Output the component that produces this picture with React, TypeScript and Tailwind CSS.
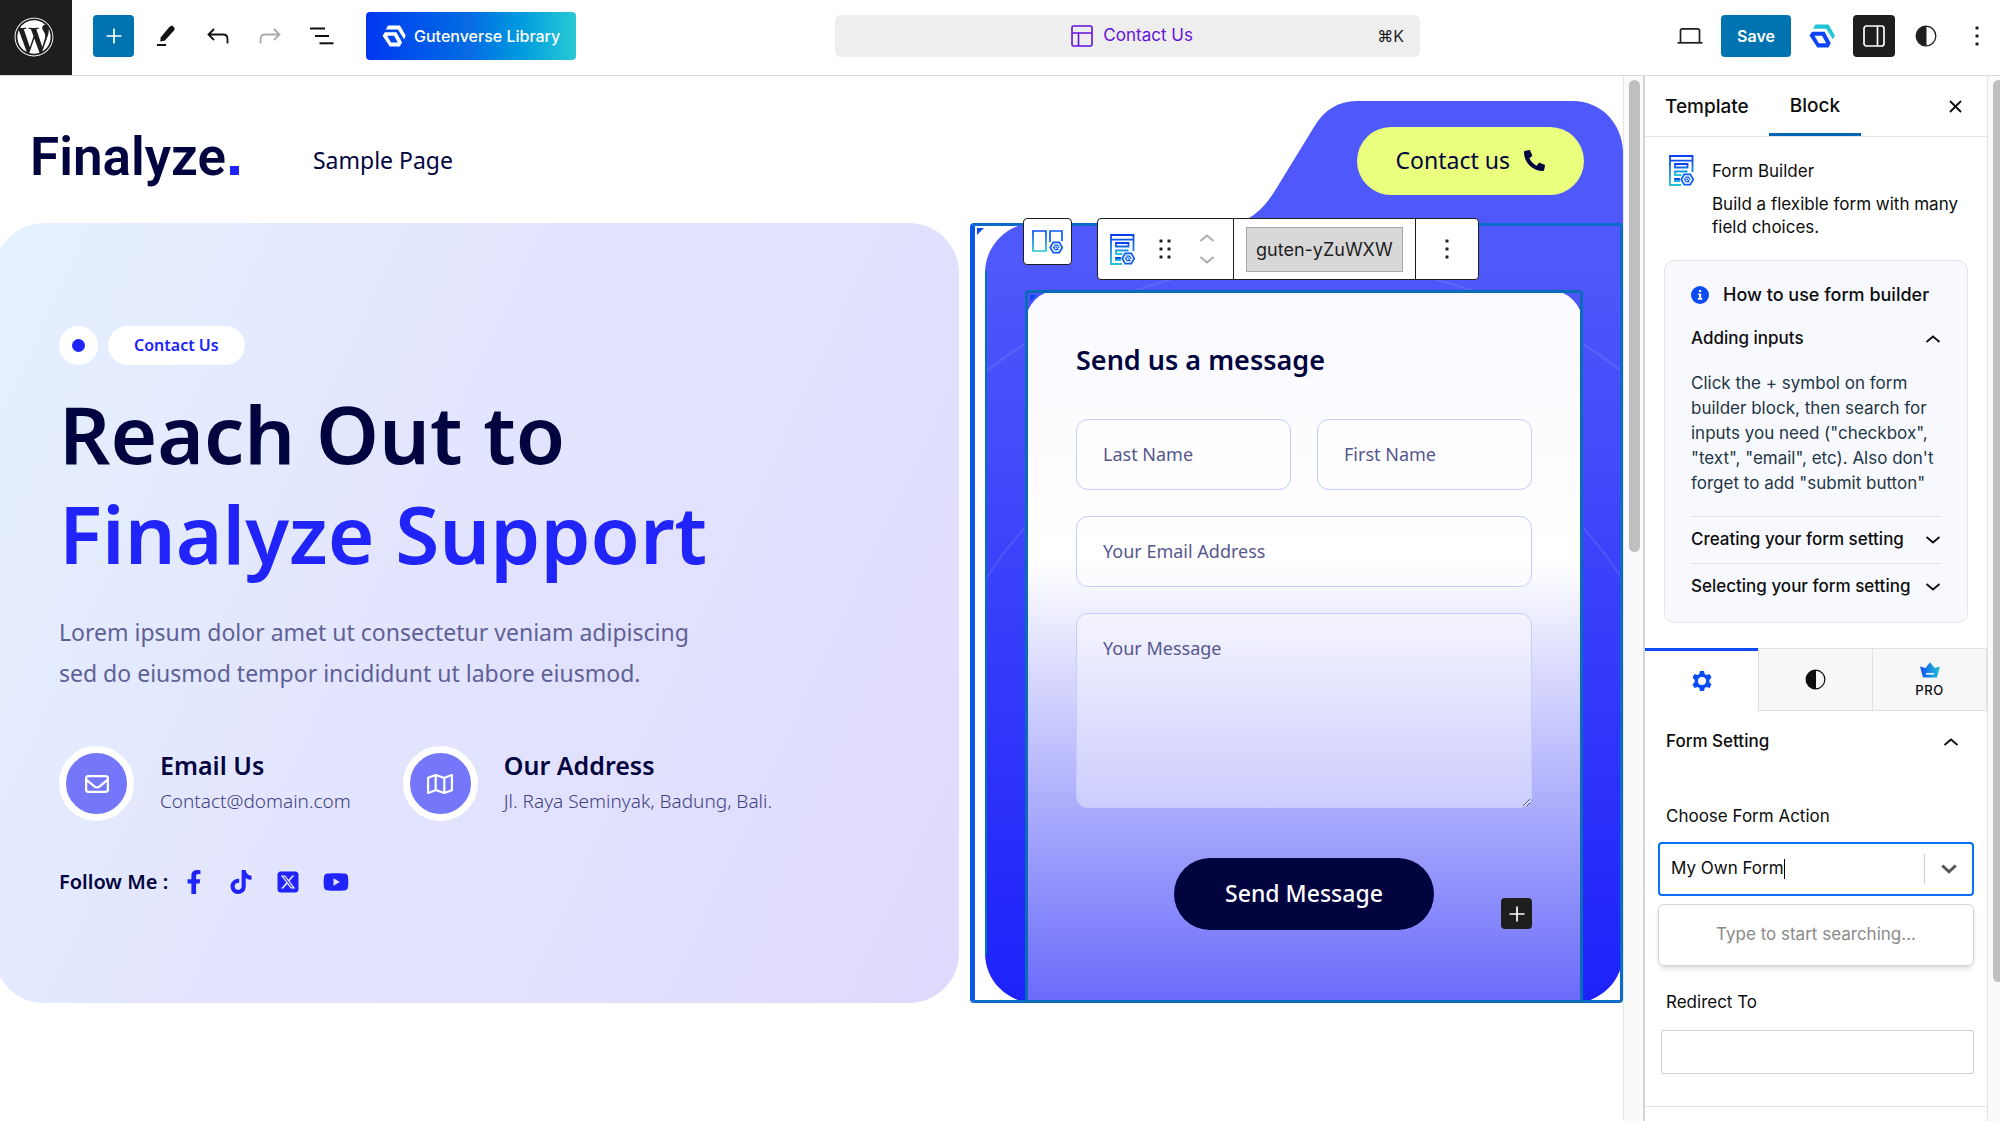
import React from 'react';
import { FaWordpress, FaPhoneAlt, FaFacebookF, FaTiktok, FaYoutube } from 'react-icons/fa';
import { FaSquareXTwitter, FaRegEnvelope, FaRegMap } from 'react-icons/fa6';

interface IconProps {
  className?: string;
}

const GutenverseMark: React.FC<IconProps & { top?: string; bottom?: string }> = ({
  className,
  top = 'currentColor',
  bottom = 'currentColor'
}) => (
  <svg viewBox="0 0 26 24" className={className} aria-hidden="true">
    <path d="M6.500 0.500H19.500L25.800 11.500 24 15.500 17.300 4.800H4z" fill={top} />
    <path
      d="M3 7.800h12.600l6.200 11.400-2.400 4.200H8.400L0.500 11.600zM5.600 11.800l4.200 7.400h7.400l-4.200-7.400z"
      fill={bottom}
      fillRule="evenodd"
    />
  </svg>
);

const FormBuilderIcon: React.FC<IconProps & { id: string }> = ({ className, id }) => (
  <svg viewBox="0 0 25 31" className={className} fill="none" aria-hidden="true">
    <defs>
      <linearGradient id={id} x1="0" y1="0" x2="0" y2="1">
        <stop offset="0" stopColor="#0a3ef0" />
        <stop offset="1" stopColor="#22c4d4" />
      </linearGradient>
    </defs>
    <g stroke={`url(#${id})`} strokeWidth="1.8">
      <path d="M12 30H1V1h22.5v16M1 5.6h22.5" />
      <path d="M6 9h12.5v3.5H6zM18.5 16.5H6v3.5h6.5" />
      <path d="M6 24h4v2H6z" />
    </g>
    <path d="M15.2 19.3h6.1l3 5.2-3 5.2h-6.1l-3-5.2z" fill="#fff" stroke="#0a5cf5" strokeWidth="1.7" />
    <path d="M16 22.2h3.5l1.8 2.8M15.4 24h3l1.6 2.7h-3z" stroke="#0a5cf5" strokeWidth="1.2" />
  </svg>
);

const ColumnsIcon: React.FC<IconProps> = ({ className }) => (
  <svg viewBox="0 0 31 24" className={className} fill="none" aria-hidden="true">
    <defs>
      <linearGradient id="columns-stroke" x1="0" y1="0" x2="0" y2="1">
        <stop offset="0" stopColor="#0a4cf0" />
        <stop offset="1" stopColor="#22c4d4" />
      </linearGradient>
    </defs>
    <path d="M1 1h13v20H1z" stroke="url(#columns-stroke)" strokeWidth="1.7" />
    <path d="M18 12V1h12v10" stroke="#0a5cf5" strokeWidth="1.7" />
    <path d="M21.2 12.3h6.1l3 5.2-3 5.2h-6.1l-3-5.2z" fill="#fff" stroke="#0a5cf5" strokeWidth="1.7" />
    <path d="M22 15.2h3.5l1.8 2.8M21.4 17h3l1.6 2.7h-3z" stroke="#0a5cf5" strokeWidth="1.2" />
  </svg>
);

const HalfCircleIcon: React.FC<IconProps> = ({ className }) => (
  <svg viewBox="0 0 22 22" className={className} aria-hidden="true">
    <circle cx="11" cy="11" r="9.8" fill="none" stroke="currentColor" strokeWidth="1.3" />
    <path d="M11.5 1a10 10 0 1 0 0 20z" fill="currentColor" />
  </svg>
);

const VerticalDots: React.FC<IconProps> = ({ className }) => (
  <svg viewBox="0 0 4 20" className={className} fill="currentColor" aria-hidden="true">
    <rect x="0.5" y="0.5" width="3" height="3" rx="0.5" />
    <rect x="0.5" y="8.5" width="3" height="3" rx="0.5" />
    <rect x="0.5" y="16.5" width="3" height="3" rx="0.5" />
  </svg>
);

const Chevron: React.FC<IconProps & { up?: boolean }> = ({ className, up }) => (
  <svg viewBox="0 0 16 10" className={className} fill="none" stroke="currentColor" strokeWidth="1.8" aria-hidden="true">
    <path d={up ? 'M1.5 8 8 2.5 14.5 8' : 'M1.5 2 8 7.5 14.5 2'} />
  </svg>
);

const PlusIcon: React.FC<IconProps> = ({ className }) => (
  <svg viewBox="0 0 16 16" className={className} stroke="currentColor" strokeWidth="1.7" aria-hidden="true">
    <path d="M8 0.5v15M0.5 8h15" />
  </svg>
);

const TopBar: React.FC = () => (
  <header className="flex h-19 shrink-0 border-b border-[#dcdcdc] bg-white">
    <a href="#dashboard" aria-label="View dashboard" className="flex w-18 items-center justify-center bg-[#1e1e1e] pr-1 pb-0.5 text-white">
      <FaWordpress className="size-10" />
    </a>
    <div className="flex flex-1 items-center pb-[3px]">
      <button aria-label="Add block" className="ml-[21px] flex h-[42px] w-[41px] items-center justify-center rounded-sm bg-[#0073b0] text-white">
        <PlusIcon className="size-4" />
      </button>
      <button aria-label="Tools" className="ml-5 flex size-6 items-center justify-center">
        <svg viewBox="0 0 20 22" className="h-[22px] w-5" fill="#111" aria-hidden="true">
          <path d="M13.8 1.6 16.2 0.6 18.8 3.2 18 5.6 8.6 15.8 4.2 16.6 4.8 12.2z" />
          <rect x="1" y="19" width="9" height="2" />
        </svg>
      </button>
      <button aria-label="Undo" className="ml-7 flex size-6 items-center justify-center">
        <svg viewBox="0 0 22 16" className="h-4 w-[22px]" fill="none" stroke="#111" strokeWidth="1.8" aria-hidden="true">
          <path d="M7 1 1.5 6.5 7 12M1.5 6.5H16c3 0 4.5 1.5 4.5 4.5v4.5" />
        </svg>
      </button>
      <button aria-label="Redo" className="ml-7 flex size-6 items-center justify-center">
        <svg viewBox="0 0 22 16" className="h-4 w-[22px]" fill="none" stroke="#aaa" strokeWidth="1.8" aria-hidden="true">
          <path d="M15 1l5.5 5.5L15 12M20.5 6.5H6c-3 0-4.5 1.5-4.5 4.5v4.5" />
        </svg>
      </button>
      <button aria-label="Document overview" className="ml-7 flex size-6 items-center justify-center">
        <svg viewBox="0 0 24 18" className="h-[18px] w-6" fill="#111" aria-hidden="true">
          <rect x="0" y="0.5" width="15" height="2" />
          <rect x="5" y="8" width="14" height="2" />
          <rect x="9.5" y="15.3" width="14" height="2" />
        </svg>
      </button>
      <button className="ml-8 flex h-12 items-center gap-2 rounded-sm bg-linear-to-r from-[#0434f0] via-[#0a6ce4] to-[#28cad4] px-4 text-base font-medium text-white">
        <GutenverseMark className="h-[22px] w-6" />
        Gutenverse Library
      </button>
    </div>
    <div className="flex items-center pb-[3px]">
      <button className="flex h-[42px] w-[585px] items-center rounded-md bg-[#eee] px-4 text-[17px]">
        <span className="w-9" />
        <span className="flex flex-1 items-center justify-center gap-2.5 text-[#6411dc]">
          <svg viewBox="0 0 22 22" className="size-[22px]" fill="none" stroke="currentColor" strokeWidth="1.6" aria-hidden="true">
            <rect x="1" y="1" width="20" height="20" rx="1.5" />
            <path d="M1 8h20M7.5 8v13" />
          </svg>
          Contact Us
        </span>
        <span className="text-base text-[#1e1e1e]">⌘K</span>
      </button>
    </div>
    <div className="flex w-[580px] items-center justify-end pr-[19px] pb-[3px] text-[#1e1e1e]">
      <button aria-label="View" className="mr-[18px]">
        <svg viewBox="0 0 26 18" className="h-[18px] w-[26px]" fill="none" stroke="currentColor" strokeWidth="1.7" aria-hidden="true">
          <path d="M3.5 15V3.5A1.7 1.7 0 0 1 5.2 1.8h15.6a1.7 1.7 0 0 1 1.7 1.7V15" />
          <path d="M0.5 15.8h25" />
        </svg>
      </button>
      <button className="h-[42px] rounded-sm bg-[#0073b0] px-4 text-base font-semibold text-white">Save</button>
      <button aria-label="Gutenverse settings" className="ml-[18px]">
        <GutenverseMark className="h-6 w-[26px]" top="#1fc4d6" bottom="#0d44f5" />
      </button>
      <button aria-label="Settings" className="ml-[18px] flex h-[42px] w-[42px] items-center justify-center rounded-sm bg-[#1e1e1e] text-white">
        <svg viewBox="0 0 22 22" className="size-[22px]" fill="none" stroke="currentColor" strokeWidth="1.7" aria-hidden="true">
          <rect x="1" y="1" width="20" height="20" rx="2.5" />
          <path d="M14.5 1v20" />
        </svg>
      </button>
      <button aria-label="Styles" className="ml-5">
        <HalfCircleIcon className="size-[22px]" />
      </button>
      <button aria-label="Options" className="ml-[38px] pr-0.5">
        <VerticalDots className="h-5 w-1" />
      </button>
    </div>
  </header>
);

const SiteHeader: React.FC = () => (
  <div className="relative flex h-[147px] shrink-0 items-center justify-between pr-[39px] pl-[30px] text-[#02043f]">
    <svg viewBox="0 0 393 124" className="absolute right-0 bottom-0 h-[124px] w-[393px]" aria-hidden="true">
      <path
        d="M0 124C14 122 22 118 26 114C34 108 40 100 46 90L84 28C94 11 108 2 127 2H343C371 2 392 24 393 52V124Z"
        fill="#4f58fa"
      />
    </svg>
    <div className="flex items-center pt-4">
      <a href="#home" className="flex items-baseline gap-1 font-['Roboto',sans-serif] text-[53px] leading-none font-semibold">
        Finalyze
        <span className="size-[9px] bg-[#2024f8]" />
      </a>
      <a href="#sample" className="ml-[74px] pt-1.5 text-[23px]">Sample Page</a>
    </div>
    <a href="#contact" className="relative mt-[22px] flex h-[68px] items-center gap-3.5 rounded-full bg-[#e9ff7d] px-[39px] text-[23px]">
      Contact us
      <FaPhoneAlt className="size-[21px]" />
    </a>
  </div>
);

interface ContactItemProps {
  icon: React.ReactNode;
  title: string;
  text: string;
}

const ContactItem: React.FC<ContactItemProps> = ({ icon, title, text }) => (
  <div className="flex items-center gap-[26px]">
    <div className="flex size-[75px] items-center justify-center rounded-full border-7 border-white bg-[#7477fa] text-white">
      {icon}
    </div>
    <div className="-mt-0.5">
      <h3 className="text-[25px] leading-9 font-semibold text-[#02043f]">{title}</h3>
      <p className="text-[19px] leading-9 font-light text-[#3f417e]">{text}</p>
    </div>
  </div>
);

const Hero: React.FC = () => (
  <section className="-ml-1.5 flex-1 rounded-[50px] bg-linear-115/srgb from-[#e5f1ff] via-[#e3e6fe] via-40% to-[#dfdafd] pt-[103px] pl-[65px]">
    <div className="flex gap-2.5">
      <span className="flex size-[39px] items-center justify-center rounded-full bg-white">
        <span className="size-[13px] rounded-full bg-[#2024f8]" />
      </span>
      <span className="flex h-[39px] items-center rounded-full bg-white px-[26px] pb-0.5 text-base font-semibold text-[#2024f8]">
        Contact Us
      </span>
    </div>
    <h1 className="mt-[18px] text-[80px] leading-[100px] font-semibold text-[#02043f]">
      Reach Out to
      <br />
      <span className="text-[#2024f8]">Finalyze Support</span>
    </h1>
    <p className="mt-[29px] text-[23px] leading-[41px] text-[#5f6196]">
      Lorem ipsum dolor amet ut consectetur veniam adipiscing
      <br />
      sed do eiusmod tempor incididunt ut labore eiusmod.
    </p>
    <div className="mt-[52px] flex gap-[52px]">
      <ContactItem icon={<FaRegEnvelope className="size-6" />} title="Email Us" text="Contact@domain.com" />
      <ContactItem icon={<FaRegMap className="size-[26px]" />} title="Our Address" text="Jl. Raya Seminyak, Badung, Bali." />
    </div>
    <div className="mt-[47px] flex items-center text-[#2024f8]">
      <span className="text-xl font-semibold text-[#02043f]">Follow Me :</span>
      <a href="#facebook" aria-label="Facebook" className="ml-3.5"><FaFacebookF className="size-6" /></a>
      <a href="#tiktok" aria-label="TikTok" className="ml-[23px]"><FaTiktok className="size-6" /></a>
      <a href="#x" aria-label="X" className="ml-[23px]"><FaSquareXTwitter className="size-6" /></a>
      <a href="#youtube" aria-label="YouTube" className="ml-[23px]"><FaYoutube className="size-[26px]" /></a>
    </div>
  </section>
);

const fieldClass =
  'w-full min-w-0 rounded-xl border border-[#c3cdfc] bg-white/40 px-[26px] text-[18px] text-[#55578e] placeholder:text-[#55578e] outline-none';

const BlockToolbar: React.FC = () => (
  <div className="absolute -top-[5px] left-[38px] z-10 flex items-start gap-[25px] font-['Inter',sans-serif] text-[#1e1e1e]">
    <button aria-label="Select parent block" className="flex h-[47px] w-[49px] items-center justify-center rounded-sm border border-[#1e1e1e] bg-white">
      <ColumnsIcon className="h-6 w-[31px]" />
    </button>
    <div className="flex h-[62px] rounded-sm border border-[#1e1e1e] bg-white">
      <div className="flex items-center border-r border-[#1e1e1e] pr-[18px] pl-3">
        <button aria-label="Form Builder">
          <FormBuilderIcon id="toolbar-form" className="h-[31px] w-[25px]" />
        </button>
        <button aria-label="Drag" className="ml-6 flex gap-1">
          <VerticalDots className="h-5 w-1" />
          <VerticalDots className="h-5 w-1" />
        </button>
        <div className="ml-7 flex flex-col gap-3 text-[#aaa]">
          <button aria-label="Move up" className="block"><Chevron up className="h-2.5 w-4" /></button>
          <button aria-label="Move down" className="block"><Chevron className="h-2.5 w-4" /></button>
        </div>
      </div>
      <div className="flex items-center border-r border-[#1e1e1e] px-3">
        <button className="h-[45px] border border-[#aaa] bg-[#d8d8d8] px-[9px] text-[18px]">guten-yZuWXW</button>
      </div>
      <button aria-label="Options" className="flex w-[62px] items-center justify-center">
        <VerticalDots className="h-5 w-1" />
      </button>
    </div>
  </div>
);

const CornerMark: React.FC<IconProps> = ({ className }) => (
  <svg viewBox="0 0 7 7" className={className} aria-hidden="true">
    <path d="M0 0h7L0 7z" fill="#0a4cf0" />
  </svg>
);

const FormPanel: React.FC = () => (
  <section className="relative w-[638px] rounded-[50px] rounded-tr-none bg-linear-to-b/srgb from-[#4f58fa] from-5% to-[#1d22fa] px-10 pt-[67px]">
    <svg viewBox="0 0 638 780" className="absolute inset-0 size-full" fill="none" stroke="#fff" strokeOpacity="0.1" strokeWidth="2" aria-hidden="true">
      <path d="M0 149A519 519 0 0 1 638 149" />
      <path d="M0 357A378 378 0 0 1 638 357" />
    </svg>
    <div className="pointer-events-none absolute inset-y-0 right-0 -left-[15px] rounded border-3 border-l-5 border-[#0a6cc8] border-l-[#0a58e8]">
      <CornerMark className="m-0.5 size-[7px]" />
    </div>
    <div className="pointer-events-none absolute inset-y-0 left-0 mt-12 mb-12 w-0.5 bg-[#0073b0]" />
    <BlockToolbar />
    <form className="relative flex h-full flex-col rounded-t-[34px] bg-linear-to-b/srgb from-[#f9f9ff] via-white via-38% to-[#696bfa] px-[51px] pt-[50px]">
      <div className="pointer-events-none absolute inset-0 rounded-t border-3 border-[#0a6cb8]">
        <CornerMark className="m-0.5 size-[7px]" />
      </div>
      <h2 className="text-[27px] leading-10 font-semibold text-[#02043f]">Send us a message</h2>
      <div className="mt-[39px] flex gap-[26px]">
        <input aria-label="Last Name" placeholder="Last Name" className={`${fieldClass} h-[71px] pb-0.5`} />
        <input aria-label="First Name" placeholder="First Name" className={`${fieldClass} h-[71px] pb-0.5`} />
      </div>
      <input aria-label="Your Email Address" type="email" placeholder="Your Email Address" className={`${fieldClass} mt-[26px] h-[71px] pb-0.5`} />
      <textarea aria-label="Your Message" placeholder="Your Message" className={`${fieldClass} mt-[26px] h-[195px] shrink-0 pt-[21px]`} />
      <button type="button" className="mt-[50px] h-[72px] self-center rounded-full bg-[#02043f] px-[51px] pb-0.5 text-[23px] font-medium text-white">
        Send Message
      </button>
      <button type="button" aria-label="Add block" className="-mt-8 flex size-[31px] items-center justify-center self-end rounded-sm bg-[#1e1e1e] text-white">
        <PlusIcon className="size-4" />
      </button>
    </form>
  </section>
);

const Canvas: React.FC = () => (
  <main className="flex min-w-0 flex-1">
    <div className="flex min-w-0 flex-1 flex-col overflow-hidden font-['Noto_Sans',sans-serif]">
      <SiteHeader />
      <div className="flex h-[780px] shrink-0 gap-[26px]">
        <Hero />
        <FormPanel />
      </div>
    </div>
    <div className="w-5 border-l border-[#e5e5e5] bg-[#fafafa] pt-1 pl-[5px]">
      <div className="h-[472px] w-[11px] rounded-full bg-[#bfbfbf]" />
    </div>
  </main>
);

const Sidebar: React.FC = () => (
  <aside className="flex w-[357px] shrink-0 overflow-hidden border-l-2 border-[#d5d5d5] text-[17px] text-[#0d0d0d]">
    <div className="min-w-0 flex-1">
      <div className="flex h-[61px] items-center border-b border-[#e5e5e5] text-[19px] font-medium">
        <button className="h-full px-5 pt-0.5">Template</button>
        <button className="h-full border-b-3 border-[#0067b8] px-[21px] pt-1">Block</button>
        <button aria-label="Close Settings" className="ml-auto pr-[25px]">
          <svg viewBox="0 0 13 13" className="size-[13px]" stroke="currentColor" strokeWidth="1.8" aria-hidden="true">
            <path d="m1 1 11 11M12 1 1 12" />
          </svg>
        </button>
      </div>

      <div className="flex gap-[18px] pt-[18px] pr-3 pl-6">
        <FormBuilderIcon id="card-form" className="h-[31px] w-[25px] shrink-0" />
        <div className="pt-1">
          <h2 className="leading-6">Form Builder</h2>
          <p className="mt-2.5 leading-[23px]">Build a flexible form with many field choices.</p>
        </div>
      </div>

      <div className="mx-[19px] mt-[21px] rounded-[10px] border border-[#e4e4ea] bg-[#f8f9ff] px-[26px] pt-[22px] pb-3">
        <h3 className="flex items-center gap-3.5 text-[18px] leading-6 font-medium">
          <svg viewBox="0 0 18 18" className="size-[18px] shrink-0" aria-hidden="true">
            <circle cx="9" cy="9" r="9" fill="#0d4cf5" />
            <path d="M8 4h2.2v2H8zM7 7.5h3.2v4.6h1.1v1.7H6.8v-1.7H8V9.1H7z" fill="#fff" />
          </svg>
          <span className="whitespace-nowrap">How to use form builder</span>
        </h3>
        <button className="mt-2 flex h-12 w-full items-center justify-between font-medium">
          Adding inputs
          <Chevron up className="h-2.5 w-4" />
        </button>
        <p className="mt-2 pb-5 leading-[25px] text-[#1f3645]">
          Click the + symbol on form builder block, then search for inputs you need ("checkbox", "text", "email", etc). Also don't forget to add "submit button"
        </p>
        <button className="flex h-[47px] w-full items-center justify-between border-t border-[#e0e0e6] font-medium">
          Creating your form setting
          <Chevron className="h-2.5 w-4" />
        </button>
        <button className="flex h-[47px] w-full items-center justify-between border-t border-[#e0e0e6] font-medium">
          Selecting your form setting
          <Chevron className="h-2.5 w-4" />
        </button>
      </div>

      <div className="mt-[25px] flex h-[63px]">
        <button aria-label="Settings" className="flex flex-1 items-center justify-center border-t-3 border-[#0d4cf5] text-[#0d4cf5]">
          <svg viewBox="0 0 20 20" className="size-5" aria-hidden="true">
            <path
              d="M8 0h4l.7 3 1.8 1 3-.9 2 3.5L17.3 9v2l2.2 2.4-2 3.5-3-.9-1.8 1L12 20H8l-.7-3-1.8-1-3 .9-2-3.5L2.7 11V9L.5 6.6l2-3.5 3 .9 1.8-1zM10 6a4 4 0 1 0 0 8 4 4 0 0 0 0-8z"
              fill="currentColor"
              fillRule="evenodd"
            />
          </svg>
        </button>
        <button aria-label="Style" className="flex flex-1 items-center justify-center border border-[#e2e2e2] bg-[#f7f7f7]">
          <HalfCircleIcon className="size-[21px]" />
        </button>
        <button className="flex flex-1 flex-col items-center justify-center gap-1 border border-l-0 border-[#e2e2e2] bg-[#f7f7f7] text-[13px] leading-4 font-medium tracking-wider">
          <svg viewBox="0 0 20 16" className="h-4 w-5" aria-hidden="true">
            <defs>
              <linearGradient id="crown" x1="0" y1="0" x2="1" y2="0">
                <stop offset="0" stopColor="#0d50f5" />
                <stop offset="1" stopColor="#22c4d4" />
              </linearGradient>
            </defs>
            <path d="M0 4.5 5.5 6 10 0.3 14.5 6 20 4.5 17 15.5H3z" fill="url(#crown)" />
            <path d="M6 11.8h8" stroke="#fff" strokeWidth="1.5" />
          </svg>
          PRO
        </button>
      </div>

      <div className="px-[13px]">
        <button className="flex h-[62px] w-full items-center justify-between pr-[15px] pl-2 font-medium">
          Form Setting
          <Chevron up className="h-2.5 w-4" />
        </button>
        <label htmlFor="form-action" className="mt-[31px] block pl-2 leading-6">Choose Form Action</label>
        <div className="mt-3.5 flex h-[54px] items-center rounded-sm border-2 border-[#0a70f5] px-[11px]">
          <input id="form-action" defaultValue="My Own Form" className="field-sizing-content outline-none" />
          <span className="h-5 w-px bg-black" />
          <span className="ml-auto h-[30px] w-px bg-[#ccc]" />
          <svg viewBox="0 0 16 10" className="mr-1 ml-4 h-2.5 w-4" fill="none" stroke="#555" strokeWidth="3" aria-hidden="true">
            <path d="m1.2 1.5 6.8 6.3 6.8-6.3" />
          </svg>
        </div>
        <div className="mt-2 flex h-[62px] items-center justify-center rounded-md border border-[#d5d5d5] text-[#8a8a8a] shadow-md">
          Type to start searching...
        </div>
        <label htmlFor="redirect-to" className="mt-6 block pl-2 leading-6">Redirect To</label>
        <div className="mt-4 pl-[3px]">
          <input id="redirect-to" className="h-11 w-full rounded-xs border border-[#d0d0d0] px-3" />
        </div>
      </div>
      <div className="mt-8 border-t border-[#e2e2e2]" />
    </div>
    <div className="w-[13px] border-l border-[#e2e2e2] bg-[#fafafa] pt-1 pl-[5px]">
      <div className="h-[902px] w-[11px] rounded-full bg-[#bfbfbf]" />
    </div>
  </aside>
);

const App: React.FC = () => {
  return (
    <div className="flex h-screen flex-col overflow-hidden bg-white font-['Inter',sans-serif]">
      <TopBar />
      <div className="flex min-h-0 flex-1">
        <Canvas />
        <Sidebar />
      </div>
    </div>
  );
};

export default App;
